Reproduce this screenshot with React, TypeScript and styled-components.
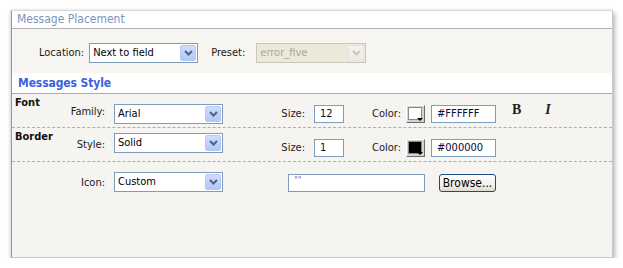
import React from "react";
import styled, { createGlobalStyle } from "styled-components";

const Global = createGlobalStyle`
  html, body { margin: 0; padding: 0; background: #ffffff; }
  body {
    font-family: "DejaVu Sans Condensed", "DejaVu Sans", "Liberation Sans", sans-serif;
    font-size: 11px;
    color: #1a1a1a;
  }
`;

const Panel = styled.div`
  box-sizing: border-box;
  margin: 10px 0 0 11px;
  width: 602px;
  height: 248px;
  border-top: 1px solid #d8d8d8;
  border-left: 1px solid #9a9a9a;
  border-right: 1px solid #c8c8c8;
  border-bottom: 1px solid #c8c8c8;
  box-shadow: 2px 3px 5px rgba(0, 0, 0, 0.28), -1px 0 3px rgba(0, 0, 0, 0.12);
  background: #f6f4f1;
  display: flex;
  flex-direction: column;
  overflow: hidden;
`;

const Header = styled.div`
  height: 17px;
  line-height: 17px;
  background: #ffffff;
  border-bottom: 1px solid #b4b4b4;
  padding-left: 5px;
  color: #7b96ba;
  font-size: 12px;
`;

const Placement = styled.div`
  display: flex;
  align-items: center;
  padding: 14px 0 10px 27px;
  background: #f7f5f2;
`;

const Label = styled.span<{ $ml?: number; $mr?: number }>`
  margin-left: ${(p) => p.$ml ?? 0}px;
  margin-right: ${(p) => p.$mr ?? 5}px;
  white-space: nowrap;
  line-height: 14px;
`;

const Heading = styled.div`
  height: 20px;
  line-height: 20px;
  background: #ffffff;
  border-bottom: 1px solid #8db2e3;
  padding-left: 6px;
  color: #3b5fe0;
  font-weight: bold;
  font-size: 12px;
  letter-spacing: -0.1px;
`;

const Row = styled.div<{ $last?: boolean }>`
  box-sizing: border-box;
  height: ${(p) => (p.$last ? "auto" : "34px")};
  padding-top: 2px;
  display: flex;
  align-items: flex-start;
  border-bottom: ${(p) => (p.$last ? "none" : "1px dashed #8cb4e6")};
`;

const LeftCell = styled.div`
  width: 102px;
  display: grid;
  grid-template-areas: "cell";
  & > * { grid-area: cell; }
`;

const GroupName = styled.span`
  justify-self: start;
  align-self: start;
  padding-left: 3px;
  font-weight: bold;
  line-height: 14px;
  color: #111;
`;

const FieldLabel = styled.span<{ $mt: number }>`
  justify-self: end;
  align-self: start;
  margin-top: ${(p) => p.$mt}px;
  padding-right: 9px;
  line-height: 14px;
`;

const RightLabel = styled.span<{ $w: number; $pr: number; $mt: number }>`
  box-sizing: border-box;
  width: ${(p) => p.$w}px;
  padding-right: ${(p) => p.$pr}px;
  margin-top: ${(p) => p.$mt}px;
  text-align: right;
  line-height: 14px;
`;

const SelectBox = styled.div<{ $w: number; $mt?: number; $disabled?: boolean }>`
  box-sizing: border-box;
  width: ${(p) => p.$w}px;
  height: 20px;
  margin-top: ${(p) => p.$mt ?? 0}px;
  border: 1px solid ${(p) => (p.$disabled ? "#c9c7ba" : "#7f9db9")};
  background: ${(p) => (p.$disabled ? "#ebe9da" : "#ffffff")};
  color: ${(p) => (p.$disabled ? "#aca899" : "#000")};
  display: flex;
  align-items: center;
  justify-content: space-between;
  padding: 0 1px 0 3px;
`;

const SelectText = styled.span`
  line-height: 16px;
  white-space: nowrap;
`;

const ArrowBtn = styled.span<{ $disabled?: boolean }>`
  box-sizing: border-box;
  width: 16px;
  height: 16px;
  border: 1px solid ${(p) => (p.$disabled ? "#e6e4dc" : "#b6c9f5")};
  border-radius: 2px;
  background: ${(p) =>
    p.$disabled
      ? "linear-gradient(#f4f3ee, #ecebe5)"
      : "linear-gradient(#cfdcfd, #b4c7f6)"};
  display: flex;
  align-items: center;
  justify-content: center;
`;

const Arrow = ({ disabled }: { disabled?: boolean }) => (
  <ArrowBtn $disabled={disabled}>
    <svg width="9" height="6" viewBox="0 0 9 6">
      <path
        d="M1 1 L4.5 4.5 L8 1"
        fill="none"
        stroke={disabled ? "#c9c8c0" : "#4d6185"}
        strokeWidth="2"
      />
    </svg>
  </ArrowBtn>
);

const Select = ({
  w,
  mt,
  value,
  disabled,
}: {
  w: number;
  mt?: number;
  value: string;
  disabled?: boolean;
}) => (
  <SelectBox $w={w} $mt={mt} $disabled={disabled}>
    <SelectText>{value}</SelectText>
    <Arrow disabled={disabled} />
  </SelectBox>
);

const TextBox = styled.div<{ $w: number; $mt: number; $ml?: number }>`
  box-sizing: border-box;
  width: ${(p) => p.$w}px;
  height: 18px;
  margin-top: ${(p) => p.$mt}px;
  margin-left: ${(p) => p.$ml ?? 0}px;
  border: 1px solid #7f9db9;
  background: #ffffff;
  padding-left: 5px;
  line-height: 16px;
  color: #0a0a3a;
`;

const Quote = styled.span`
  color: #3a78d8;
  font-size: 9px;
  vertical-align: top;
  line-height: 10px;
`;

const Swatch = styled.div<{ $color: string; $mt: number }>`
  box-sizing: border-box;
  position: relative;
  width: 19px;
  height: 18px;
  margin-top: ${(p) => p.$mt}px;
  margin-right: 6px;
  border: 1px solid;
  border-color: #ffffff #6b6b6b #6b6b6b #ffffff;
  background: #d6d3ce;
  padding: 1px 2px 2px 1px;
  &::before {
    content: "";
    display: block;
    width: 100%;
    height: 100%;
    background: ${(p) => p.$color};
    border: 1px solid #8a8a8a;
    box-sizing: border-box;
  }
  &::after {
    content: "";
    position: absolute;
    right: 1px;
    bottom: 1px;
    width: 0;
    height: 0;
    border-left: 3px solid transparent;
    border-right: 3px solid transparent;
    border-top: 3px solid #000;
    background: transparent;
  }
`;

const StyleGlyph = styled.span<{ $ml: number; $italic?: boolean }>`
  margin-left: ${(p) => p.$ml}px;
  margin-top: 7px;
  font-family: "Liberation Serif", "DejaVu Serif", serif;
  font-weight: bold;
  font-style: ${(p) => (p.$italic ? "italic" : "normal")};
  font-size: 14px;
  line-height: 14px;
  color: #222;
`;

const Button = styled.div`
  box-sizing: border-box;
  margin-left: 14px;
  margin-top: 10px;
  width: 57px;
  height: 18px;
  border: 1px solid #1c4a82;
  border-radius: 3px;
  background: linear-gradient(#ffffff, #f2f1ea 60%, #dedbcf);
  text-align: center;
  line-height: 16px;
  font-size: 12px;
  color: #000;
`;

const Fill = styled.div`
  flex: 1;
`;

export default function App() {
  return (
    <>
      <Global />
      <Panel>
        <Header>Message Placement</Header>
        <Placement>
          <Label>Location:</Label>
          <Select w={109} value="Next to field" />
          <Label $ml={13} $mr={11}>Preset:</Label>
          <Select w={110} value="error_five" disabled />
        </Placement>
        <Heading>Messages Style</Heading>
        <Row>
          <LeftCell>
            <GroupName>Font</GroupName>
            <FieldLabel $mt={9}>Family:</FieldLabel>
          </LeftCell>
          <Select w={109} mt={8} value="Arial" />
          <RightLabel $w={91} $pr={9} $mt={11}>Size:</RightLabel>
          <TextBox $w={30} $mt={9}>12</TextBox>
          <RightLabel $w={62} $pr={5} $mt={11}>Color:</RightLabel>
          <Swatch $color="#ffffff" $mt={9} />
          <TextBox $w={65} $mt={9}>#FFFFFF</TextBox>
          <StyleGlyph $ml={16}>B</StyleGlyph>
          <StyleGlyph $ml={24} $italic>I</StyleGlyph>
        </Row>
        <Row>
          <LeftCell>
            <GroupName>Border</GroupName>
            <FieldLabel $mt={8}>Style:</FieldLabel>
          </LeftCell>
          <Select w={109} mt={3} value="Solid" />
          <RightLabel $w={91} $pr={9} $mt={11}>Size:</RightLabel>
          <TextBox $w={30} $mt={9}>1</TextBox>
          <RightLabel $w={62} $pr={5} $mt={11}>Color:</RightLabel>
          <Swatch $color="#000000" $mt={9} />
          <TextBox $w={65} $mt={9}>#000000</TextBox>
        </Row>
        <Row $last>
          <LeftCell>
            <FieldLabel $mt={12}>Icon:</FieldLabel>
          </LeftCell>
          <Select w={109} mt={8} value="Custom" />
          <TextBox $w={137} $mt={10} $ml={65}>
            <Quote>""</Quote>
          </TextBox>
          <Button>Browse...</Button>
        </Row>
        <Fill />
      </Panel>
    </>
  );
}
